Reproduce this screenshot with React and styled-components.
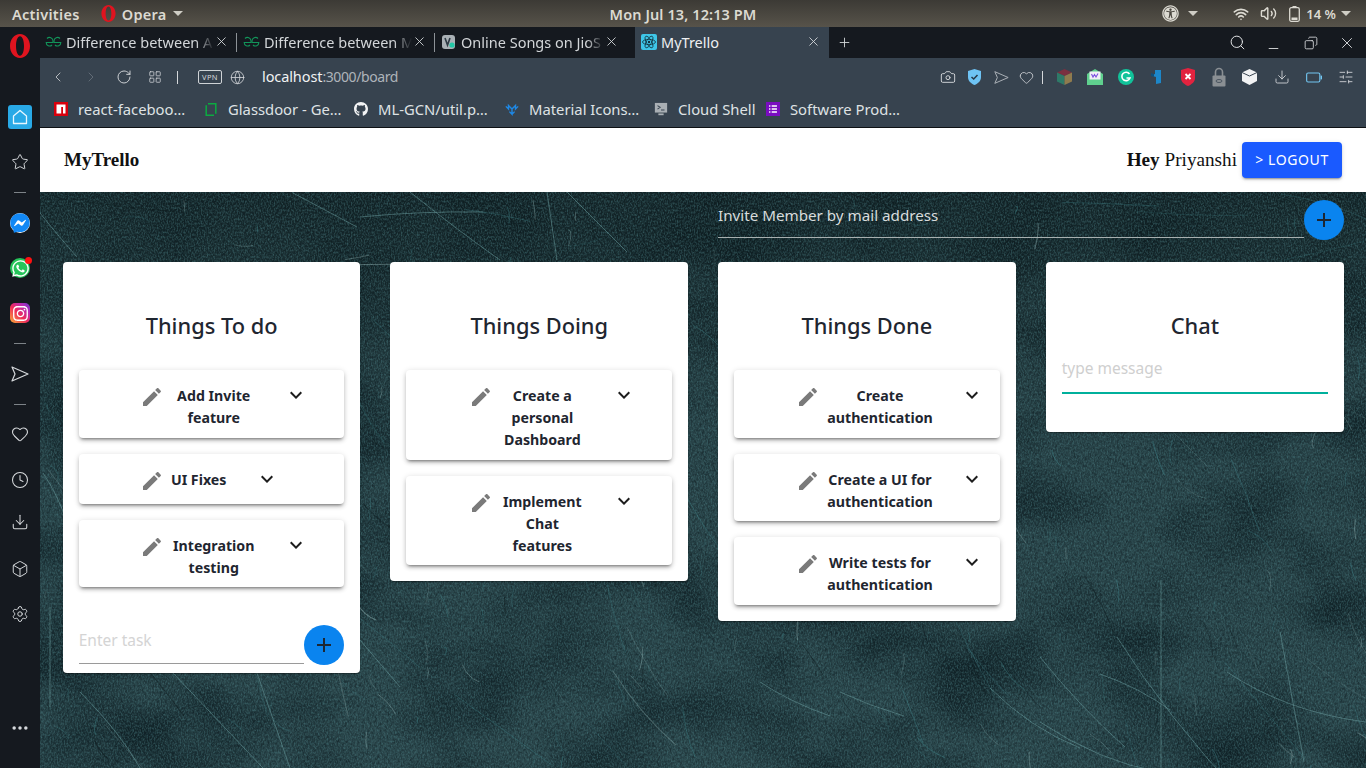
// MyTrello board inside an Opera window on Ubuntu
import React from 'react';
import styled, { createGlobalStyle } from 'styled-components';
import {
  Camera, ChevronLeft, ChevronRight, RotateCw, LayoutGrid, Globe, Heart, Search, X, Plus, Minus,
  Copy, Download, SlidersHorizontal, Star, Clock, Box, Settings, Volume2, Wifi, MoreHorizontal,
} from 'lucide-react';
import { FaWhatsapp, FaFacebookMessenger, FaInstagram, FaGithub, FaUniversalAccess } from 'react-icons/fa';

const UI = '"Noto Sans", "Open Sans", sans-serif';
const SERIF = '"Liberation Serif", serif';

const GlobalStyle = createGlobalStyle`
  html, body { margin: 0; padding: 0; width: 1366px; height: 768px; overflow: hidden; background: #15191f; }
  * { box-sizing: border-box; }
`;

const Screen = styled.div`
  width: 1366px;
  height: 768px;
  display: flex;
  flex-direction: column;
  font-family: ${UI};
`;

/* gnome top bar */
const TopBar = styled.div`
  height: 27px;
  flex: none;
  display: grid;
  grid-template-columns: 1fr auto 1fr;
  align-items: center;
  padding: 0 12px;
  background: linear-gradient(#3c3a35, #57534a);
  color: #dcdad2;
  font-size: 14.5px;
  font-weight: 600;
  letter-spacing: 0.3px;
`;

const TopLeft = styled.div`
  display: flex;
  align-items: center;
`;

const TopRight = styled.div`
  display: flex;
  align-items: center;
  justify-content: flex-end;
  margin-right: 3px;
`;

const DateText = styled.span`
  letter-spacing: 0.1px;
`;

const BatteryText = styled.span`
  font-size: 13px;
  letter-spacing: 0;
`;

const Caret = styled.span`
  width: 0;
  height: 0;
  border-left: 5px solid transparent;
  border-right: 5px solid transparent;
  border-top: 5px solid #cfcdc5;
  margin-left: ${(p) => p.$left || 6}px;
  margin-right: ${(p) => p.$right || 0}px;
`;

const Gap = styled.span`
  display: inline-flex;
  margin-left: ${(p) => p.$left || 0}px;
  margin-right: ${(p) => p.$right || 0}px;
`;

const Window = styled.div`
  flex: 1;
  display: flex;
  min-height: 0;
`;

/* opera sidebar */
const Sidebar = styled.div`
  width: 40px;
  flex: none;
  display: flex;
  flex-direction: column;
  align-items: center;
  padding: 7px 0 28px;
  background: #15191f;
  color: #d6d9dc;
`;

const SideItem = styled.div`
  width: 24px;
  height: 24px;
  flex: none;
  display: flex;
  align-items: center;
  justify-content: center;
  position: relative;
  margin-top: ${(p) => (p.$push ? 'auto' : `${p.$gap || 0}px`)};
`;

const SideDash = styled.span`
  width: 12px;
  height: 1px;
  background: #7d8388;
`;

const HomeTile = styled.div`
  width: 24px;
  height: 24px;
  border-radius: 3px;
  background: #29a9e6;
  display: flex;
  align-items: center;
  justify-content: center;
`;

const Badge = styled.span`
  position: absolute;
  top: 1px;
  right: 0;
  width: 7px;
  height: 7px;
  border-radius: 50%;
  background: #f11;
`;

const RoundTile = styled.div`
  width: 20px;
  height: 20px;
  border-radius: ${(p) => p.$radius || '50%'};
  background: ${(p) => p.$bg};
  color: #fff;
  display: flex;
  align-items: center;
  justify-content: center;
`;

const Browser = styled.div`
  flex: 1;
  min-width: 0;
  display: flex;
  flex-direction: column;
`;

/* tabs */
const TabBar = styled.div`
  height: 31px;
  flex: none;
  margin-left: -1px;
  display: flex;
  align-items: center;
  background: #15191f;
  color: #d7dadd;
`;

const Tab = styled.div`
  width: ${(p) => p.$w}px;
  height: 31px;
  flex: none;
  display: flex;
  align-items: center;
  padding: 0 8px 2px 6px;
  background: ${(p) => (p.$active ? '#37434f' : 'transparent')};
  position: relative;
  &::after {
    content: '';
    display: ${(p) => (p.$sep ? 'block' : 'none')};
    position: absolute;
    right: 0;
    top: 6px;
    height: 19px;
    width: 1px;
    background: #8d9297;
  }
`;

const TabText = styled.span`
  flex: 1;
  min-width: 0;
  margin-left: 4px;
  font-size: 14.5px;
  white-space: nowrap;
  color: ${(p) => (p.$active ? '#eef0f2' : '#d3d6d9')};
  -webkit-mask-image: ${(p) => (p.$active ? 'none' : 'linear-gradient(90deg, #000 88%, transparent 100%)')};
`;

const WindowBtns = styled.div`
  margin-left: auto;
  display: flex;
  align-items: center;
  gap: 20px;
  padding-right: 10px;
  color: #e2e4e6;
`;

/* address bar */
const Toolbar = styled.div`
  height: 38px;
  flex: none;
  display: flex;
  align-items: center;
  padding: 0 12px 0 10px;
  background: #37434f;
  color: #d5d8db;
`;

const ToolBtn = styled.span`
  display: inline-flex;
  flex: none;
  width: ${(p) => p.$w || 16}px;
  justify-content: center;
  margin-left: ${(p) => p.$left || 0}px;
  color: ${(p) => p.$color || 'inherit'};
`;

const Divider = styled.span`
  width: 1px;
  height: 13px;
  flex: none;
  background: #d5d8db;
  margin-left: ${(p) => p.$left}px;
`;

const VpnTag = styled.span`
  width: 24px;
  height: 14px;
  flex: none;
  margin-left: 20px;
  border: 1px solid #cfd3d6;
  border-radius: 2px;
  font-size: 7.5px;
  line-height: 12px;
  text-align: center;
  letter-spacing: 0.4px;
  color: #d5d8db;
`;

const Url = styled.div`
  margin: -2px 0 0 17px;
  font-size: 14.5px;
  letter-spacing: -0.1px;
  color: #f1f2f3;
  & span { color: #aeb4ba; font-size: 14px; letter-spacing: -0.4px; }
`;

const ToolRight = styled.div`
  margin-left: auto;
  display: flex;
  align-items: center;
`;

const Bookmarks = styled.div`
  height: 32px;
  flex: none;
  display: flex;
  align-items: center;
  padding: 0 0 5px 14px;
  background: #37434f;
  color: #dfe2e4;
  font-size: 14.8px;
  border-bottom: 1px solid #0e1114;
`;

const Bookmark = styled.div`
  width: ${(p) => p.$w}px;
  flex: none;
  display: flex;
  align-items: center;
  gap: 10px;
  white-space: nowrap;
`;

const MarkIcon = styled.span`
  width: 14px;
  height: 14px;
  flex: none;
  display: flex;
  align-items: center;
  justify-content: center;
`;

/* app */
const Page = styled.div`
  flex: 1;
  min-height: 0;
  display: flex;
  flex-direction: column;
`;

const Header = styled.header`
  height: 64px;
  flex: none;
  display: flex;
  align-items: center;
  justify-content: space-between;
  padding: 0 24px;
  background: #fff;
`;

const Brand = styled.div`
  font-family: ${SERIF};
  font-size: 19px;
  font-weight: 700;
  color: #111;
`;

const HeaderRight = styled.div`
  display: flex;
  align-items: center;
  gap: 5px;
  font-family: ${SERIF};
  font-size: 19.2px;
  color: #111;
  & b { font-weight: 700; }
`;

const LogoutButton = styled.button`
  width: 100px;
  height: 36px;
  padding: 0 0 2px;
  border: 0;
  border-radius: 4px;
  background: #1a5aff;
  color: #fff;
  font-family: ${UI};
  font-size: 14px;
  letter-spacing: 0.6px;
  box-shadow: 0 3px 1px -2px rgba(0, 0, 0, 0.2), 0 2px 2px rgba(0, 0, 0, 0.14), 0 1px 5px rgba(0, 0, 0, 0.12);
`;

const Board = styled.main`
  flex: 1;
  min-height: 0;
  position: relative;
  overflow: hidden;
  padding: 8px 22px 0 22.7px;
  background: #2a454a;
`;

const Texture = styled.svg`
  position: absolute;
  inset: 0;
  width: 100%;
  height: 100%;
`;

const BoardInner = styled.div`
  position: relative;
`;

const InviteRow = styled.div`
  display: flex;
  align-items: flex-end;
  height: 40px;
  margin-left: 655.3px;
  width: 626px;
`;

const FieldLine = styled.div`
  flex: 1;
  height: 38px;
  display: flex;
  align-items: center;
  padding-bottom: ${(p) => p.$pb || 8}px;
  border-bottom: 1px solid ${(p) => p.$line || '#9a9a9a'};
  font-size: ${(p) => p.$size || 15.5}px;
  color: ${(p) => p.$color || '#d4d4d4'};
  margin-bottom: ${(p) => p.$mb || 2}px;
`;

const FabButton = styled.button`
  width: 40px;
  height: 40px;
  flex: none;
  padding: 0;
  border: 0;
  border-radius: 50%;
  background: #0a84ef;
  color: #1d2733;
  display: flex;
  align-items: center;
  justify-content: center;
`;

const Columns = styled.div`
  display: grid;
  grid-template-columns: repeat(3, 297.8px) 298.4px;
  column-gap: 29.87px;
  align-items: start;
  margin-top: 22px;
`;

const Column = styled.section`
  border-radius: 4px;
  background: #fff;
  padding: 0 16px 16px;
  box-shadow: 0 2px 1px -1px rgba(0, 0, 0, 0.2), 0 1px 1px rgba(0, 0, 0, 0.14), 0 1px 3px rgba(0, 0, 0, 0.12);
`;

const ColumnTitle = styled.h2`
  margin: 0;
  height: 108px;
  padding-top: 47px;
  font-size: 21.8px;
  line-height: 34px;
  font-weight: 500;
  color: #1f2630;
  text-align: center;
`;

const TaskList = styled.div`
  display: flex;
  flex-direction: column;
  gap: 16px;
`;

const Task = styled.article`
  min-height: 50px;
  display: flex;
  align-items: flex-start;
  padding: 15px 0 8.5px ${(p) => p.$pad}px;
  border-radius: 4px;
  background: #fff;
  box-shadow: 0 3px 3px -2px rgba(0, 0, 0, 0.4), 0 3px 4px rgba(0, 0, 0, 0.14), 0 1px 6px rgba(0, 0, 0, 0.14);
`;

const PencilSlot = styled.span`
  width: 24px;
  height: 24px;
  flex: none;
  color: #7a7a7a;
`;

const TaskText = styled.div`
  width: ${(p) => p.$w}px;
  flex: none;
  margin-left: 7px;
  margin-right: ${(p) => p.$gap || 27}px;
  font-size: 14.2px;
  line-height: 22px;
  font-weight: 700;
  color: #1f2630;
  text-align: center;
`;

const ChevronSlot = styled.span`
  width: 24px;
  height: 24px;
  flex: none;
  margin-top: -2px;
  color: #1d1d1d;
`;

const TaskInputRow = styled.div`
  display: flex;
  align-items: flex-end;
  margin-top: 38px;
  margin-bottom: -8px;
`;

const ChatInput = styled.div`
  height: 46px;
  display: flex;
  align-items: center;
  margin-top: -22px;
  padding-bottom: 4px;
  border-bottom: 2px solid #00b09c;
  font-size: 15.5px;
  color: #cfcfcf;
`;

const ChatColumn = styled(Column)`
  padding-bottom: 38px;
`;

const PencilIcon = () => (
  <svg width="24" height="24" viewBox="0 0 24 24" fill="currentColor">
    <path d="M3 17.25V21h3.75L17.81 9.94l-3.75-3.75L3 17.25zM20.71 7.04c.39-.39.39-1.02 0-1.41l-2.34-2.34c-.39-.39-1.02-.39-1.41 0l-1.83 1.83 3.75 3.75 1.83-1.83z" />
  </svg>
);

const ExpandIcon = () => (
  <svg width="24" height="24" viewBox="0 0 24 24" fill="currentColor">
    <path d="M16.59 8.59L12 13.17 7.41 8.59 6 10l6 6 6-6z" />
  </svg>
);

const AddIcon = () => (
  <svg width="24" height="24" viewBox="0 0 24 24" fill="currentColor">
    <path d="M19 13h-6v6h-2v-6H5v-2h6V5h2v6h6v2z" />
  </svg>
);

const OperaLogo = ({ w, h }) => (
  <svg width={w} height={h} viewBox="0 0 20 24">
    <path
      fillRule="evenodd"
      fill="#e0141f"
      d="M10 0c5.6 0 10 5.4 10 12s-4.4 12-10 12S0 18.6 0 12 4.4 0 10 0zm0 2.2C7.6 2.2 6 6.6 6 12s1.600 9.8 4 9.8 4-4.4 4-9.8-1.600-9.8-4-9.8z"
    />
  </svg>
);

const ArrowOutline = ({ size, color }) => (
  <svg width={size} height={size} viewBox="0 0 18 18" fill="none" stroke={color || 'currentColor'} strokeWidth="1.2" strokeLinejoin="round">
    <path d="M1 2l16 7-16 7 3-7z" />
  </svg>
);

// two mirrored G letters, the GeeksforGeeks favicon
const GfgMark = () => (
  <svg width="17" height="12" viewBox="0 0 17 12" fill="none" stroke="#12955a" strokeWidth="1.1">
    <path d="M2 2.500A3.500 3.500 0 0 1 8 5v1.500H1.200A3.400 3.400 0 0 0 7 9" />
    <path d="M15 2.500A3.500 3.500 0 0 0 9 5v1.500h6.800A3.400 3.400 0 0 1 10 9" />
  </svg>
);

const ReactMark = () => (
  <svg width="16" height="16" viewBox="0 0 16 16">
    <rect width="16" height="16" rx="2" fill="#3ec6e8" />
    <g fill="none" stroke="#12323e" strokeWidth="0.8">
      <ellipse cx="8" cy="8" rx="6.500" ry="2.600" />
      <ellipse cx="8" cy="8" rx="6.500" ry="2.600" transform="rotate(60 8 8)" />
      <ellipse cx="8" cy="8" rx="6.500" ry="2.600" transform="rotate(120 8 8)" />
    </g>
    <circle cx="8" cy="8" r="1.200" fill="#12323e" />
  </svg>
);

const JioMark = () => (
  <svg width="16" height="16" viewBox="0 0 16 16">
    <rect x="1" y="1" width="13" height="14" rx="3" fill="#aab1b6" />
    <path d="M4 4l2.500 7L9 4" fill="none" stroke="#2f3a44" strokeWidth="1.600" />
    <circle cx="11" cy="11" r="2.600" fill="#22c7a5" />
  </svg>
);

const ToolIcons = () => (
  <ToolRight>
    <ToolBtn><Camera size={16} strokeWidth={1.4} /></ToolBtn>
    <ToolBtn $left={10}>
      <svg width="15" height="16" viewBox="0 0 15 16">
        <path d="M7.500 0l6.500 2v6c0 4-3 6.500-6.500 8C4 14.500 1 12 1 8V2z" fill="#6ec3f4" />
        <path d="M4.500 8l2.200 2 3.800-4" fill="none" stroke="#263746" strokeWidth="1.500" />
      </svg>
    </ToolBtn>
    <ToolBtn $left={11}><ArrowOutline size={15} color="#aab0b6" /></ToolBtn>
    <ToolBtn $left={9}><Heart size={15} strokeWidth={1.3} /></ToolBtn>
    <Divider $left={8} />
    <ToolBtn $left={13}>
      <svg width="15" height="16" viewBox="0 0 15 16">
        <path d="M7.500 0L15 3.500 7.500 7 0 3.500z" fill="#7a3040" />
        <path d="M0 3.500L7.500 7v9L0 12.500z" fill="#2e7a68" />
        <path d="M15 3.500L7.500 7v9l7.500-3.500z" fill="#8f7b4e" />
      </svg>
    </ToolBtn>
    <ToolBtn $left={15}>
      <svg width="16" height="16" viewBox="0 0 16 16">
        <path d="M0 5l8-5 8 5v11H0z" fill="#5fd08e" />
        <rect x="2.500" y="2.500" width="11" height="8" fill="#f0f0f6" />
        <path d="M4.500 5l1.500 3 1.500-2.500L9 8l2-3.500" fill="none" stroke="#7a4fe0" strokeWidth="1.100" />
      </svg>
    </ToolBtn>
    <ToolBtn $left={15}>
      <svg width="16" height="16" viewBox="0 0 16 16">
        <circle cx="8" cy="8" r="8" fill="#11c39a" />
        <path d="M11.500 5a4.200 4.200 0 1 0 .5 4H8.500" fill="none" stroke="#fff" strokeWidth="1.600" />
      </svg>
    </ToolBtn>
    <ToolBtn $left={14}>
      <svg width="14" height="16" viewBox="0 0 14 16">
        <path d="M6 1h6v13l-5 1V8L2 6.500 6 5z" fill="#1d87c9" />
        <path d="M2 4l3 1v3L2 7z" fill="#0e4f7a" />
      </svg>
    </ToolBtn>
    <ToolBtn $left={16}>
      <svg width="14" height="18" viewBox="0 0 14 18">
        <path d="M7 0l7 2v8c0 4-3.500 6.500-7 8-3.500-1.500-7-4-7-8V2z" fill="#e2233f" />
        <path d="M4.500 6l5 5m0-5l-5 5" stroke="#fff" strokeWidth="1.800" />
      </svg>
    </ToolBtn>
    <ToolBtn $left={15}>
      <svg width="14" height="20" viewBox="0 0 14 20">
        <path d="M3.500 9V5a3.500 3.500 0 0 1 7 0v4" fill="none" stroke="#8a8f93" strokeWidth="1.600" />
        <rect x="0.500" y="8.500" width="13" height="11" rx="1" fill="#8a8f93" />
        <ellipse cx="7" cy="14" rx="3" ry="1.500" fill="none" stroke="#4a5560" strokeWidth="1" />
      </svg>
    </ToolBtn>
    <ToolBtn $left={14}>
      <svg width="15" height="16" viewBox="0 0 15 16">
        <path d="M7.500 0L15 3.500V12l-7.500 4L0 12V3.500z" fill="#f2f3f4" />
        <path d="M0 3.500L7.500 7 15 3.500" fill="none" stroke="#37434f" strokeWidth="1" />
      </svg>
    </ToolBtn>
    <ToolBtn $left={17}><Download size={16} strokeWidth={1.3} /></ToolBtn>
    <ToolBtn $left={16}>
      <svg width="17" height="11" viewBox="0 0 17 11">
        <rect x="0.700" y="0.700" width="14" height="9.600" rx="1.500" fill="none" stroke="#72c6f2" strokeWidth="1.200" />
        <rect x="15.500" y="3.500" width="1.500" height="4" fill="#72c6f2" />
      </svg>
    </ToolBtn>
    <ToolBtn $left={16}><SlidersHorizontal size={16} strokeWidth={1.3} /></ToolBtn>
  </ToolRight>
);

// deterministic scratches so the picture stays the same on each load
const makeScratches = () => {
  let seed = 4711;
  const rnd = () => {
    seed = (seed * 16807) % 2147483647;
    return seed / 2147483647;
  };
  const out = [];
  for (let i = 0; i < 420; i += 1) {
    const x = rnd() * 1326;
    const y = rnd() * 576;
    const kind = rnd();
    let angle;
    let len;
    if (kind < 0.55) {
      // little vertical flecks
      angle = 1.45 + rnd() * 0.25;
      len = 4 + rnd() * 22;
    } else {
      angle = y < 90 ? -0.25 + rnd() * 0.6 : 0.6 + rnd() * 0.8;
      len = 15 + rnd() * rnd() * 130;
    }
    const bend = (rnd() - 0.5) * 10;
    const dx = Math.cos(angle) * len;
    const dy = Math.sin(angle) * len;
    const tone = rnd();
    out.push({
      d: `M${x.toFixed(1)} ${y.toFixed(1)}q${(dx / 2 + bend).toFixed(1)} ${(dy / 2 - bend).toFixed(1)} ${dx.toFixed(1)} ${dy.toFixed(1)}`,
      color: tone < 0.35 ? '#0c181b' : tone < 0.8 ? '#3f8288' : '#8fb0b0',
      w: 0.5 + rnd() * 0.6,
      o: 0.2 + rnd() * 0.35,
    });
  }
  return out;
};

const scratches = makeScratches();

// the long scratches that stand out in the picture, in board coordinates
const longScratches = [
  'M507 0l10 68',
  'M527 0l60 60',
  'M370 0q50 40 90 68',
  'M320 25q60-6 123-5',
  'M253 1l64 34',
  'M0 21q20 25 37 44',
  'M1121 388v190',
  'M1077 445q50 80 127 162',
  'M1060 482q40 14 70 36',
  'M1000 465q40 50 85 90',
  'M800 500q30 14 64 24',
  'M950 496q40 40 90 60',
  'M1000 530q60 40 120 50',
  'M133 481l90 95',
  'M217 481l33 95',
  'M320 448l40 47',
  'M3 281q16 24 24 50',
  'M10 415v100',
  'M1240 440l24 130',
  'M720 490q30 20 70 34',
  'M1187 480q60 40 139 50',
  'M40 500q40 40 60 76',
];

const BoardTexture = () => (
  <Texture viewBox="0 0 1326 576" preserveAspectRatio="none">
    <defs>
      <filter id="grain" x="0" y="0" width="100%" height="100%" colorInterpolationFilters="sRGB">
        <feTurbulence type="fractalNoise" baseFrequency="0.7 0.45" numOctaves="2" seed="8" />
        <feColorMatrix values="0 0 0 0 0.30  0 0 0 0 0.50  0 0 0 0 0.52  0 0 0 1.6 -0.62" />
      </filter>
      <filter id="darkgrain" x="0" y="0" width="100%" height="100%" colorInterpolationFilters="sRGB">
        <feTurbulence type="fractalNoise" baseFrequency="0.4 0.25" numOctaves="2" seed="33" />
        <feColorMatrix values="0 0 0 0 0.05  0 0 0 0 0.10  0 0 0 0 0.12  0 0 0 1.8 -0.7" />
      </filter>
      <filter id="blotch" x="0" y="0" width="100%" height="100%" colorInterpolationFilters="sRGB">
        <feTurbulence type="fractalNoise" baseFrequency="0.008 0.012" numOctaves="3" seed="21" />
        <feColorMatrix values="0 0 0 0 0.06  0 0 0 0 0.13  0 0 0 0 0.15  0 0 0 2.2 -0.9" />
      </filter>
      <linearGradient id="shade" x1="0" y1="0" x2="0" y2="1">
        <stop offset="0" stopColor="#0e1d20" stopOpacity="0.8" />
        <stop offset="0.4" stopColor="#0e1d20" stopOpacity="0.1" />
        <stop offset="1" stopColor="#0e1d20" stopOpacity="0" />
      </linearGradient>
    </defs>
    <rect width="1326" height="576" filter="url(#blotch)" />
    <rect width="1326" height="576" fill="url(#shade)" />
    <rect width="1326" height="576" filter="url(#darkgrain)" opacity="0.6" />
    <rect width="1326" height="576" filter="url(#grain)" opacity="0.7" />
    {scratches.map((s, i) => (
      <path key={i} d={s.d} fill="none" stroke={s.color} strokeWidth={s.w} strokeOpacity={s.o} />
    ))}
    {longScratches.map((d) => (
      <path key={d} d={d} fill="none" stroke="#6fa3a6" strokeWidth="1" strokeOpacity="0.5" />
    ))}
  </Texture>
);

const todo = [
  { lines: ['Add Invite', 'feature'], pad: 61, w: 86 },
  { lines: ['UI Fixes'], pad: 61, w: 56, gap: 28 },
  { lines: ['Integration', 'testing'], pad: 61, w: 86 },
];

const doing = [
  { lines: ['Create a', 'personal', 'Dashboard'], pad: 63, w: 84, gap: 28 },
  { lines: ['Implement', 'Chat', 'features'], pad: 63, w: 84, gap: 28 },
];

const done = [
  { lines: ['Create', 'authentication'], pad: 62, w: 106 },
  { lines: ['Create a UI for', 'authentication'], pad: 62, w: 106 },
  { lines: ['Write tests for', 'authentication'], pad: 62, w: 106 },
];

const TaskCards = ({ items }) => (
  <TaskList>
    {items.map((t) => (
      <Task key={t.lines.join()} $pad={t.pad}>
        <PencilSlot><PencilIcon /></PencilSlot>
        <TaskText $w={t.w} $gap={t.gap}>
          {t.lines.map((l) => <div key={l}>{l}</div>)}
        </TaskText>
        <ChevronSlot><ExpandIcon /></ChevronSlot>
      </Task>
    ))}
  </TaskList>
);

export default function App() {
  return (
    <Screen>
      <GlobalStyle />
      <TopBar>
        <TopLeft>
          <span>Activities</span>
          <Gap $left={21} $right={6}><OperaLogo w={15} h={17} /></Gap>
          <span>Opera</span>
          <Caret />
        </TopLeft>
        <DateText>Mon Jul 13, 12:13 PM</DateText>
        <TopRight>
          <FaUniversalAccess size={17} color="#dcdad2" />
          <Caret $left={9} $right={35} />
          <Gap $right={11}><Wifi size={16} strokeWidth={2.4} color="#dcdad2" /></Gap>
          <Gap $right={12}><Volume2 size={17} strokeWidth={2} color="#dcdad2" /></Gap>
          <Gap $right={6}>
            <svg width="11" height="16" viewBox="0 0 11 16">
              <rect x="0.700" y="1.700" width="9.600" height="13.600" rx="1.500" fill="none" stroke="#dcdad2" strokeWidth="1.300" />
              <rect x="3.500" y="0" width="4" height="2" fill="#dcdad2" />
              <rect x="2.500" y="11.500" width="6" height="2.500" fill="#dcdad2" />
            </svg>
          </Gap>
          <BatteryText>14 %</BatteryText>
          <Caret $left={5} />
        </TopRight>
      </TopBar>
      <Window>
        <Sidebar>
          <SideItem><OperaLogo w={20} h={24} /></SideItem>
          <SideItem $gap={47}>
            <HomeTile>
              <svg width="16" height="16" viewBox="0 0 16 16">
                <path d="M8 1.500L14.500 7v7.500h-13V7z" fill="none" stroke="#e8f7ff" strokeWidth="1.300" strokeLinejoin="round" />
              </svg>
            </HomeTile>
          </SideItem>
          <SideItem $gap={21}><Star size={18} strokeWidth={1.3} /></SideItem>
          <SideItem $gap={6}><SideDash /></SideItem>
          <SideItem $gap={7}>
            <RoundTile $bg="#fff">
              <FaFacebookMessenger size={20} color="#1288f5" />
            </RoundTile>
          </SideItem>
          <SideItem $gap={21}>
            <RoundTile $bg="#25c45a"><FaWhatsapp size={19} /></RoundTile>
            <Badge />
          </SideItem>
          <SideItem $gap={21}>
            <RoundTile $radius="5px" $bg="linear-gradient(45deg, #f9a13a 5%, #ee2a5a 45%, #b92bb3 75%, #6a3bd0)">
              <FaInstagram size={17} />
            </RoundTile>
          </SideItem>
          <SideItem $gap={6}><SideDash /></SideItem>
          <SideItem $gap={7}><ArrowOutline size={18} /></SideItem>
          <SideItem $gap={6}><SideDash /></SideItem>
          <SideItem $gap={6}><Heart size={18} strokeWidth={1.4} /></SideItem>
          <SideItem $gap={22}><Clock size={18} strokeWidth={1.4} /></SideItem>
          <SideItem $gap={18}><Download size={18} strokeWidth={1.4} /></SideItem>
          <SideItem $gap={23}><Box size={18} strokeWidth={1.3} /></SideItem>
          <SideItem $gap={21}><Settings size={18} strokeWidth={1.3} /></SideItem>
          <SideItem $push><MoreHorizontal size={20} strokeWidth={2.2} /></SideItem>
        </Sidebar>
        <Browser>
          <TabBar>
            <Tab $w={198} $sep>
              <GfgMark />
              <TabText>Difference between A</TabText>
              <X size={15} strokeWidth={1.4} />
            </Tab>
            <Tab $w={198} $sep>
              <GfgMark />
              <TabText>Difference between M</TabText>
              <X size={15} strokeWidth={1.4} />
            </Tab>
            <Tab $w={200}>
              <JioMark />
              <TabText>Online Songs on JioS</TabText>
              <Gap $right={8}><X size={15} strokeWidth={1.4} /></Gap>
            </Tab>
            <Tab $w={194} $active>
              <ReactMark />
              <TabText $active>MyTrello</TabText>
              <X size={15} strokeWidth={1.4} />
            </Tab>
            <Gap $left={8}><Plus size={15} strokeWidth={1.4} /></Gap>
            <WindowBtns>
              <Search size={17} strokeWidth={1.4} />
              <Minus size={15} strokeWidth={1.4} style={{ marginTop: 11 }} />
              <Copy size={14} strokeWidth={1.4} style={{ marginLeft: 3, transform: 'scaleX(-1)' }} />
              <X size={18} strokeWidth={1.2} />
            </WindowBtns>
          </TabBar>
          <Toolbar>
            <ToolBtn><ChevronLeft size={22} strokeWidth={1.2} /></ToolBtn>
            <ToolBtn $left={17} $color="#6c7680"><ChevronRight size={22} strokeWidth={1.2} /></ToolBtn>
            <ToolBtn $left={17}><RotateCw size={16} strokeWidth={1.4} /></ToolBtn>
            <ToolBtn $left={15}><LayoutGrid size={14} strokeWidth={1.3} /></ToolBtn>
            <Divider $left={14} />
            <VpnTag>VPN</VpnTag>
            <ToolBtn $left={7}><Globe size={15} strokeWidth={1.3} /></ToolBtn>
            <Url>localhost<span>:3000/board</span></Url>
            <ToolIcons />
          </Toolbar>
          <Bookmarks>
            <Bookmark $w={150}>
              <MarkIcon>
                <svg width="14" height="14" viewBox="0 0 14 14">
                  <rect width="14" height="14" fill="#d8000c" />
                  <path d="M2.500 2.500h9v9H9V5H7.200v6.500H2.500z" fill="#fff" />
                </svg>
              </MarkIcon>
              react-faceboo…
            </Bookmark>
            <Bookmark $w={150}>
              <MarkIcon>
                <svg width="12" height="15" viewBox="0 0 12 15">
                  <path d="M3 1.700h7.800v10M9 13.300H1.200v-10" fill="none" stroke="#0caa41" strokeWidth="1.500" />
                </svg>
              </MarkIcon>
              Glassdoor - Ge…
            </Bookmark>
            <Bookmark $w={151}>
              <MarkIcon><FaGithub size={16} color="#f2f3f4" /></MarkIcon>
              ML-GCN/util.p…
            </Bookmark>
            <Bookmark $w={149}>
              <MarkIcon>
                <svg width="16" height="14" viewBox="0 0 16 14">
                  <path d="M1 4l3 3V3l4 4 4-4v4l3-3M8 7v6l-3-3M8 13l3-3" fill="none" stroke="#1e88e5" strokeWidth="1.600" />
                </svg>
              </MarkIcon>
              Material Icons…
            </Bookmark>
            <Bookmark $w={112}>
              <MarkIcon>
                <svg width="16" height="15" viewBox="0 0 16 15">
                  <rect x="1" y="0" width="14" height="11" fill="#a9afb4" />
                  <path d="M4 3l3 2-3 2M8 8h4" fill="none" stroke="#37434f" strokeWidth="1.200" />
                  <rect x="5" y="12" width="6" height="2" fill="#a9afb4" />
                </svg>
              </MarkIcon>
              Cloud Shell
            </Bookmark>
            <Bookmark $w={160}>
              <MarkIcon>
                <svg width="16" height="16" viewBox="0 0 16 16">
                  <rect width="16" height="16" fill="#7a0cc0" />
                  <path d="M3.500 4.500h1.500m1.500 0h6M3.500 8h1.500m1.500 0h6m-9 3.500h1.500m1.500 0h6" stroke="#fff" strokeWidth="1.700" />
                </svg>
              </MarkIcon>
              Software Prod…
            </Bookmark>
          </Bookmarks>
          <Page>
            <Header>
              <Brand>MyTrello</Brand>
              <HeaderRight>
                <span><b>Hey</b> Priyanshi</span>
                <LogoutButton>&gt; LOGOUT</LogoutButton>
              </HeaderRight>
            </Header>
            <Board>
              <BoardTexture />
              <BoardInner>
                <InviteRow>
                  <FieldLine $line="#a8b0b0" $color="#d8dcdc" $size={15.2}>Invite Member by mail address</FieldLine>
                  <FabButton aria-label="invite"><AddIcon /></FabButton>
                </InviteRow>
                <Columns>
                  <Column>
                    <ColumnTitle>Things To do</ColumnTitle>
                    <TaskCards items={todo} />
                    <TaskInputRow>
                      <FieldLine $mb={1} $pb={10}>Enter task</FieldLine>
                      <FabButton aria-label="add task"><AddIcon /></FabButton>
                    </TaskInputRow>
                  </Column>
                  <Column>
                    <ColumnTitle>Things Doing</ColumnTitle>
                    <TaskCards items={doing} />
                  </Column>
                  <Column>
                    <ColumnTitle>Things Done</ColumnTitle>
                    <TaskCards items={done} />
                  </Column>
                  <ChatColumn>
                    <ColumnTitle>Chat</ColumnTitle>
                    <ChatInput>type message</ChatInput>
                  </ChatColumn>
                </Columns>
              </BoardInner>
            </Board>
          </Page>
        </Browser>
      </Window>
    </Screen>
  );
}
